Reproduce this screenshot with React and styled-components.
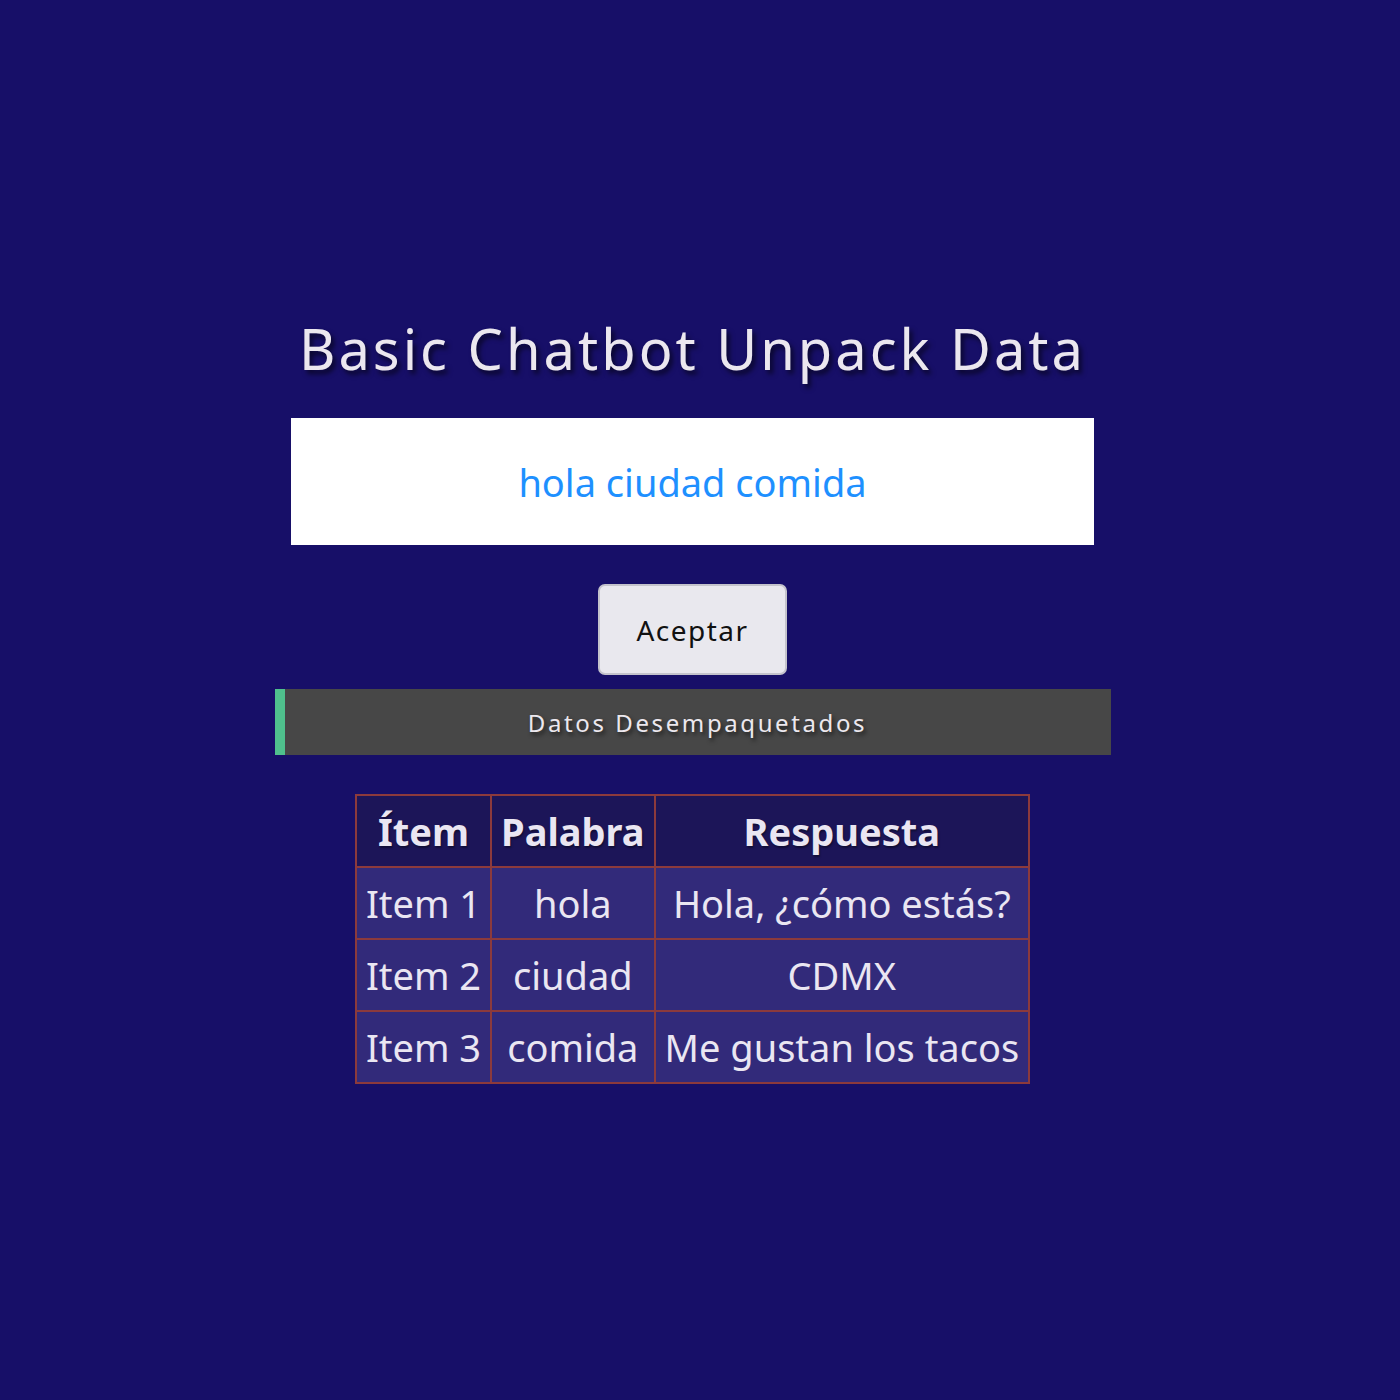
import React, { useState } from "react";
import styled, { createGlobalStyle } from "styled-components";

const GlobalStyle = createGlobalStyle`
  html, body {
    margin: 0;
    padding: 0;
    background: #170f68;
    font-family: "Noto Sans", "Open Sans", sans-serif;
  }
`;

const rows = [
  { item: "Item 1", word: "hola", answer: "Hola, ¿cómo estás?" },
  { item: "Item 2", word: "ciudad", answer: "CDMX" },
  { item: "Item 3", word: "comida", answer: "Me gustan los tacos" },
];

const App = () => {
  const [text, setText] = useState("hola ciudad comida");

  return (
    <>
      <GlobalStyle />
      <Page>
        <Title>Basic Chatbot Unpack Data</Title>
        <Input value={text} onChange={(e) => setText(e.target.value)} />
        <Button type="button">Aceptar</Button>
        <Banner>Datos Desempaquetados</Banner>
        <Table>
          <thead>
            <tr>
              <Th>Ítem</Th>
              <Th>Palabra</Th>
              <Th>Respuesta</Th>
            </tr>
          </thead>
          <tbody>
            {rows.map((r) => (
              <tr key={r.item}>
                <Td>{r.item}</Td>
                <Td>{r.word}</Td>
                <Td>{r.answer}</Td>
              </tr>
            ))}
          </tbody>
        </Table>
      </Page>
    </>
  );
};

export default App;

const Page = styled.div`
  width: 1385px;
  min-height: 1400px;
  display: flex;
  flex-direction: column;
  align-items: center;
  padding-top: 310px;
  box-sizing: border-box;
`;

const Title = styled.h1`
  margin: 0;
  font-size: 56px;
  font-weight: 400;
  letter-spacing: 3px;
  color: #ebe7ef;
  text-shadow: 3px 4px 5px rgba(0, 0, 0, 0.6);
  line-height: 76px;
`;

const Input = styled.input`
  margin-top: 32px;
  width: 803px;
  height: 127px;
  box-sizing: border-box;
  border: none;
  outline: none;
  background: #fff;
  color: #1e90ff;
  font-family: "Noto Sans", "Open Sans", sans-serif;
  font-size: 38px;
  text-align: center;
`;

const Button = styled.button`
  margin-top: 39px;
  width: 189px;
  height: 91px;
  background: #e9e8ee;
  border: 2px solid #c4c3cc;
  border-radius: 7px;
  color: #111;
  font-family: "Noto Sans", "Open Sans", sans-serif;
  font-size: 28px;
  letter-spacing: 1.5px;
`;

const Banner = styled.div`
  margin-top: 14px;
  width: 836px;
  height: 66px;
  box-sizing: border-box;
  background: #474747;
  border-left: 10px solid #4fc08d;
  display: flex;
  align-items: center;
  justify-content: center;
  color: #ece8ee;
  font-size: 24px;
  letter-spacing: 2.6px;
  text-shadow: 2px 3px 4px rgba(0, 0, 0, 0.6);
`;

const Table = styled.table`
  margin-top: 39px;
  border-collapse: collapse;
  border: 2px solid #8c3a3c;
  color: #eae6f2;
  font-size: 38px;
`;

const Th = styled.th`
  background: #1c1558;
  border: 2px solid #8c3a3c;
  font-weight: 700;
  height: 70px;
  padding: 0 9px;
  text-shadow: 1px 2px 2px rgba(0, 0, 0, 0.4);
`;

const Td = styled.td`
  background: #322a7a;
  border: 2px solid #8c3a3c;
  text-align: center;
  height: 70px;
  padding: 0 9px;
  white-space: nowrap;
`;
